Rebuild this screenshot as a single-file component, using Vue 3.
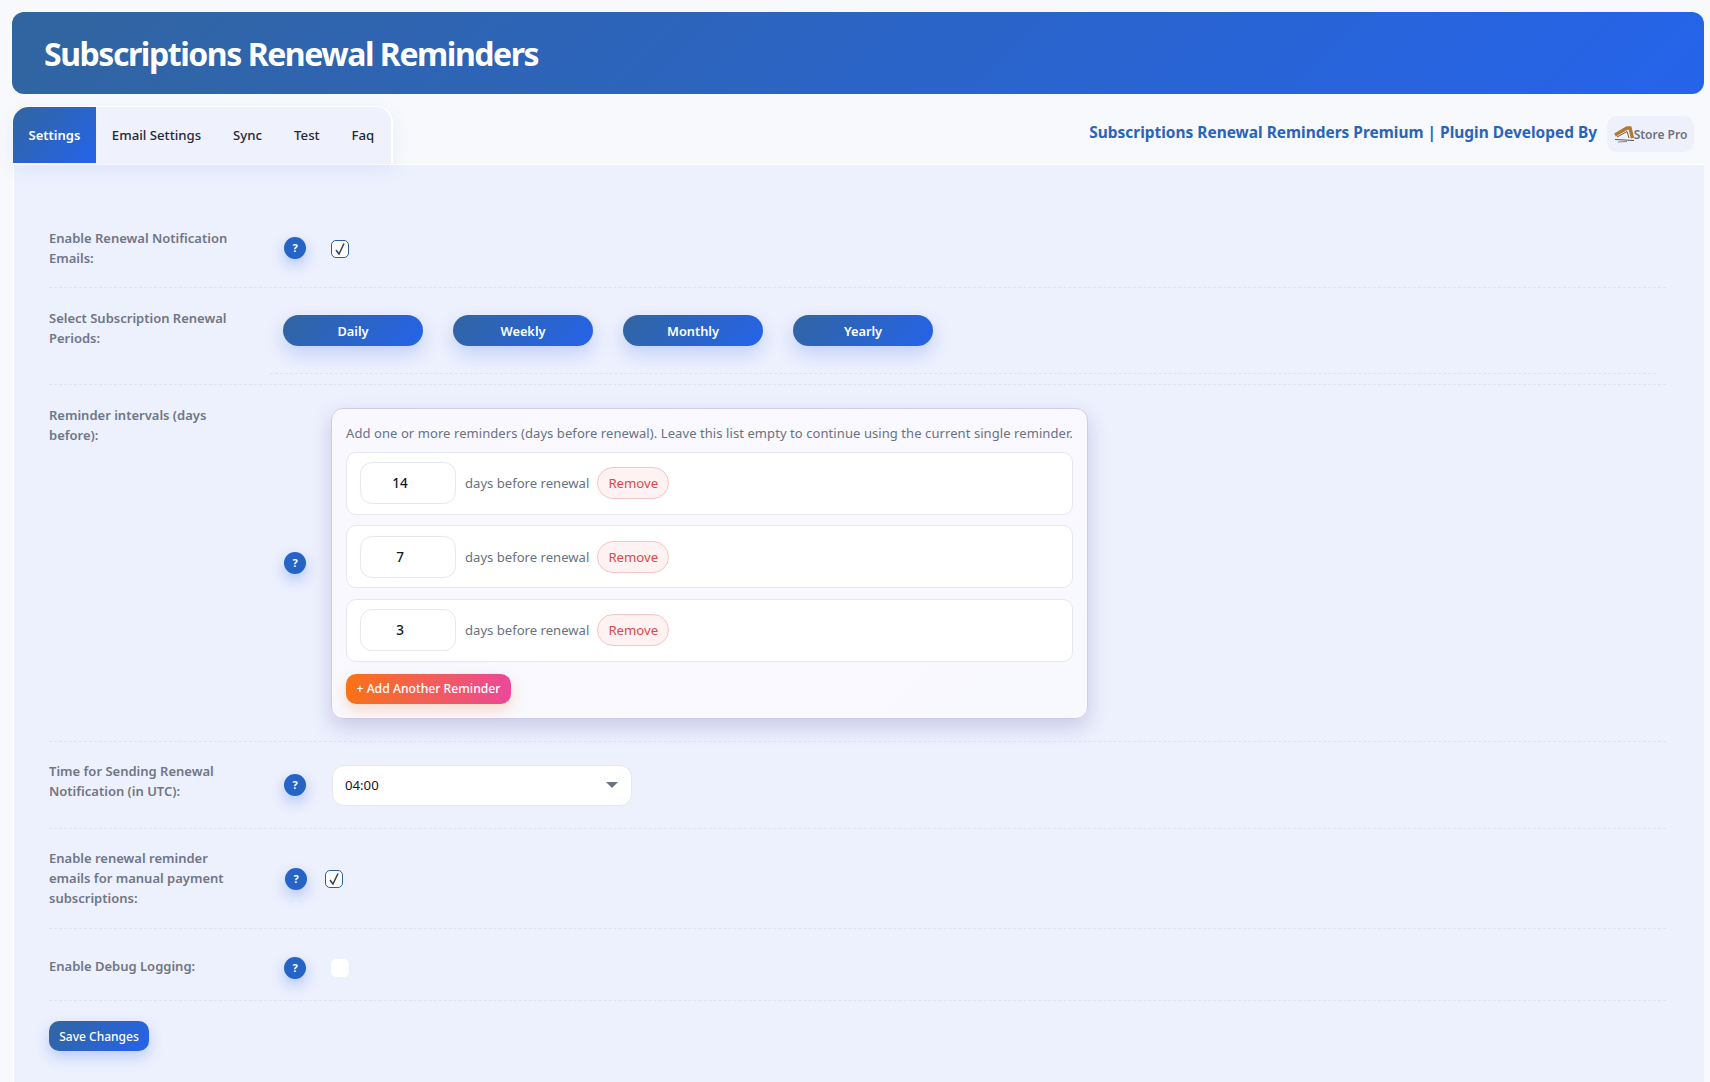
<template>
  <div class="page">
    <header class="hero">
      <h1>Subscriptions Renewal Reminders</h1>
    </header>

    <div class="tab-bar">
      <nav class="tabs">
        <a
          v-for="tab in tabs"
          :key="tab"
          class="tab"
          :class="{ active: tab === activeTab }"
          @click="activeTab = tab"
        >{{ tab }}</a>
      </nav>
      <div class="credit">
        <span>Subscriptions Renewal Reminders Premium | Plugin Developed By</span>
        <div class="logo">
          <svg width="20" height="18" viewBox="0 0 20 18">
            <path d="M1 10 L13 3 L16 3 L18.5 13" fill="none" stroke="#b47a33" stroke-width="3.4" />
            <path d="M3 12 L13 6.5 L15 13" fill="none" stroke="#7f5a2a" stroke-width="1" />
            <path d="M1 14.5 L20 15.5" stroke="#555" stroke-width="1" />
            <path d="M4 17 L13 16.5" stroke="#888" stroke-width="1" />
          </svg>
          <span>Store Pro</span>
        </div>
      </div>
    </div>

    <main class="panel">
      <section class="row row-first">
        <label class="label">Enable Renewal Notification Emails:</label>
        <span class="help">?</span>
        <span class="check on">
          <svg width="12" height="14" viewBox="0 0 12 14"><path d="M2 8 L5 12 L10 1.5" fill="none" stroke="#374151" stroke-width="1.5" /></svg>
        </span>
      </section>

      <section class="row row-periods">
        <label class="label">Select Subscription Renewal Periods:</label>
        <div class="periods">
          <div class="period-list">
            <button v-for="p in periods" :key="p" class="period">{{ p }}</button>
          </div>
        </div>
      </section>

      <section class="row row-intervals">
        <label class="label">Reminder intervals (days before):</label>
        <span class="help">?</span>
        <div class="box">
          <p class="box-note">Add one or more reminders (days before renewal). Leave this list empty to continue using the current single reminder.</p>
          <div v-for="d in reminders" :key="d" class="reminder">
            <input class="days" type="text" :value="d" readonly />
            <span class="days-text">days before renewal</span>
            <button class="remove">Remove</button>
          </div>
          <button class="add">+ Add Another Reminder</button>
        </div>
      </section>

      <section class="row row-time">
        <label class="label">Time for Sending Renewal Notification (in UTC):</label>
        <span class="help">?</span>
        <div class="select">
          <span>04:00</span>
          <i class="caret"></i>
        </div>
      </section>

      <section class="row row-manual">
        <label class="label">Enable renewal reminder emails for manual payment subscriptions:</label>
        <span class="help">?</span>
        <span class="check on">
          <svg width="12" height="14" viewBox="0 0 12 14"><path d="M2 8 L5 12 L10 1.5" fill="none" stroke="#374151" stroke-width="1.5" /></svg>
        </span>
      </section>

      <section class="row row-debug">
        <label class="label">Enable Debug Logging:</label>
        <span class="help">?</span>
        <span class="check"></span>
      </section>

      <button class="save">Save Changes</button>
    </main>
  </div>
</template>

<script setup>
import { ref } from 'vue';

const tabs = ['Settings', 'Email Settings', 'Sync', 'Test', 'Faq'];
const activeTab = ref('Settings');
const periods = ['Daily', 'Weekly', 'Monthly', 'Yearly'];
const reminders = [14, 7, 3];
</script>

<style>
html,
body {
  margin: 0;
  background: #f7f9fc;
}
</style>

<style scoped>
.page {
  height: 1082px;
  overflow: hidden;
  padding: 12px 6px 0 12px;
  box-sizing: border-box;
  font-family: "Noto Sans", "Open Sans", sans-serif;
  color: #111827;
}

.hero {
  height: 82px;
  display: flex;
  align-items: center;
  padding-left: 32px;
  border-radius: 12px;
  background: linear-gradient(135deg, #31659f 0%, #2563eb 100%);
  box-sizing: border-box;
}

.hero h1 {
  margin: 0;
  font-size: 32px;
  font-weight: 700;
  letter-spacing: -1.45px;
  color: #fff;
}

.tab-bar {
  display: flex;
  justify-content: space-between;
  align-items: flex-start;
  margin-top: 12px;
  height: 58px;
  padding-left: 1px;
}

.tabs {
  display: flex;
  width: 380px;
  height: 57px;
  box-sizing: border-box;
  background: #eff1fd;
  border: solid #fff;
  border-width: 1px 2px 0 0;
  border-radius: 16px 16px 0 0;
  box-shadow: 0 6px 20px rgba(37, 99, 235, 0.08);
  overflow: hidden;
}

.tab {
  display: flex;
  align-items: center;
  padding: 0 16px;
  font-size: 13.2px;
  font-weight: 500;
  white-space: nowrap;
  color: #1f2937;
  cursor: pointer;
}

.tab.active {
  padding: 0 15.5px;
  background: linear-gradient(135deg, #31659f 0%, #2563eb 100%);
  color: #fff;
  font-size: 13px;
  font-weight: 600;
}

.credit {
  display: flex;
  align-items: center;
  gap: 10px;
  margin-top: 10px;
  padding-right: 10px;
  font-size: 15.45px;
  font-weight: 700;
  color: #2b63b8;
}

.credit > span {
  margin-top: -4px;
}

.logo {
  width: 87px;
  height: 36px;
  display: flex;
  align-items: center;
  justify-content: center;
  background: #eef1fb;
  border-radius: 10px;
  font-size: 12px;
  font-weight: 600;
  color: #6b7280;
}

.panel {
  height: 930px;
  margin-left: 1px;
  padding: 44px 38px 0 35px;
  box-sizing: border-box;
  background: #edf0fd;
  border-top: 1px solid #fff;
  border-left: 1px solid #fff;
}

.row {
  display: flex;
  align-items: center;
  border-bottom: 1px dashed #dfe3f0;
  box-sizing: border-box;
}

.label {
  flex: 0 0 190px;
  margin-right: 45px;
  font-size: 13px;
  font-weight: 600;
  line-height: 20px;
  color: #6f7686;
}

.help {
  flex: 0 0 22px;
  width: 22px;
  height: 22px;
  border-radius: 50%;
  background: #2563c4;
  box-shadow: 0 6px 14px rgba(37, 99, 235, 0.3);
  color: #fff;
  font-size: 11px;
  font-weight: 700;
  line-height: 22px;
  text-align: center;
}

.check {
  flex: 0 0 18px;
  width: 18px;
  height: 18px;
  margin-left: 25px;
  border-radius: 5px;
  background: #fff;
  box-sizing: border-box;
  display: flex;
  align-items: center;
  justify-content: center;
}

.check.on {
  border: 1px solid #2d5f9e;
}

.row-first {
  height: 79px;
  padding: 20px 0;
}

.row-first .check {
  margin-top: 1px;
}

.row-periods {
  height: 97px;
  align-items: flex-start;
  padding-top: 20px;
}

.periods {
  flex: 1;
  margin-left: -14px;
  margin-right: 10px;
  padding: 7px 0 28px 13px;
  height: 66px;
  box-sizing: border-box;
  border-bottom: 1px dashed #dfe3f0;
}

.period-list {
  display: flex;
  gap: 30px;
}

.period {
  width: 140px;
  height: 31px;
  border: 0;
  border-radius: 16px;
  background: linear-gradient(135deg, #31659f 0%, #2563eb 100%);
  box-shadow: 0 8px 18px rgba(37, 99, 235, 0.22);
  color: #fff;
  font: 600 12.8px "Noto Sans", sans-serif;
}

.row-intervals {
  height: 357px;
}

.row-intervals .label {
  align-self: flex-start;
  margin-top: 20px;
}

.box {
  width: 757px;
  height: 311px;
  margin-left: 25px;
  padding: 14px;
  box-sizing: border-box;
  background: linear-gradient(135deg, #f9f8ff, #f8f9fe);
  border: 1px solid #cfcbea;
  border-radius: 12px;
  box-shadow: 0 8px 20px rgba(70, 70, 150, 0.22);
}

.box-note {
  margin: 0 0 9px;
  font-size: 13px;
  letter-spacing: 0.075px;
  line-height: 20px;
  color: #6b7280;
  white-space: nowrap;
}

.reminder {
  display: flex;
  align-items: center;
  height: 63px;
  margin-bottom: 10.5px;
  padding-left: 13px;
  box-sizing: border-box;
  background: #fff;
  border: 1px solid #e5e7f2;
  border-radius: 10px;
}

.days {
  width: 96px;
  height: 42px;
  padding: 0 16px 0 0;
  box-sizing: border-box;
  text-align: center;
  background: #fff;
  border: 1px solid #e5e7f2;
  border-radius: 12px;
  outline: none;
  font: 500 13.5px "Noto Sans", sans-serif;
  color: #111827;
}

.days-text {
  margin-left: 9px;
  font-size: 13.1px;
  color: #6b7280;
}

.remove {
  width: 72px;
  height: 32px;
  margin-left: 8px;
  background: #fef2f2;
  border: 1px solid #f5c6c6;
  border-radius: 16px;
  color: #dc4a4a;
  font: 400 13.2px "Noto Sans", sans-serif;
}

.add {
  display: block;
  width: 165px;
  height: 30px;
  margin-top: 12px;
  padding: 0;
  border: 0;
  border-radius: 10px;
  background: linear-gradient(90deg, #f97316, #ec4899);
  box-shadow: 0 6px 14px rgba(249, 115, 22, 0.22);
  color: #fff;
  font: 500 12.2px "Noto Sans", sans-serif;
}

.row-time {
  height: 87px;
}

.row-time .label {
  align-self: flex-start;
  margin-top: 19px;
}

.select {
  width: 300px;
  height: 41px;
  margin-left: 26px;
  padding: 0 13px 0 12px;
  box-sizing: border-box;
  display: flex;
  align-items: center;
  justify-content: space-between;
  background: #fff;
  border: 1px solid #e5e7f2;
  border-radius: 12px;
  font-size: 13.2px;
}

.caret {
  width: 0;
  height: 0;
  border: solid transparent;
  border-width: 6px 6px 0;
  border-top-color: #6b7280;
}

.row-manual {
  height: 100px;
}

.row-manual .label {
  margin-top: -2px;
}

.row-manual .help {
  margin-left: 1px;
  margin-right: -1px;
}

.row-manual .check {
  margin-left: 19px;
}

.row-debug {
  height: 72px;
  padding-top: 2px;
}

.row-debug .help,
.row-debug .check {
  margin-top: 4px;
}

.save {
  display: block;
  width: 100px;
  height: 30px;
  margin-top: 20px;
  padding: 0;
  border: 0;
  border-radius: 10px;
  background: linear-gradient(135deg, #31659f 0%, #2563eb 100%);
  box-shadow: 0 6px 14px rgba(37, 99, 235, 0.25);
  color: #fff;
  font: 500 12px "Noto Sans", sans-serif;
}
</style>
